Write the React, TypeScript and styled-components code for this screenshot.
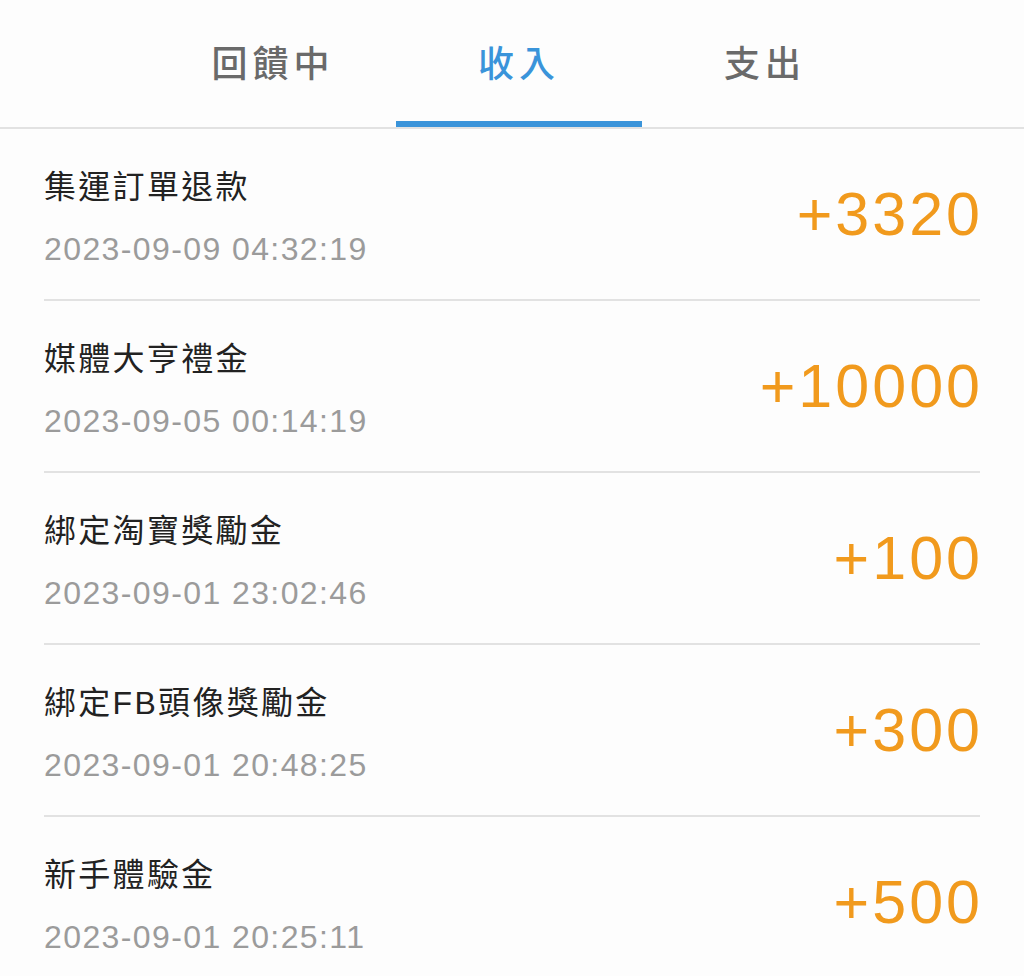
import React, { useState } from 'react'
import styled, { createGlobalStyle } from 'styled-components'

const GlobalStyle = createGlobalStyle`
  body {
    margin: 0;
    background: #fdfdfd;
    font-family: "Liberation Sans", "Noto Sans CJK TC", sans-serif;
  }
`

const Page = styled.div`
  width: 1024px;
  height: 976px;
  overflow: hidden;
  background: #fdfdfd;
`

const TabBar = styled.div`
  display: flex;
  justify-content: center;
  height: 127px;
  padding-left: 14px;
  border-bottom: 2px solid #e2e2e2;
`

const Tab = styled.div<{ $active?: boolean }>`
  position: relative;
  width: 246px;
  display: flex;
  align-items: center;
  justify-content: center;
  padding-bottom: 6px;
  font-size: 36px;
  font-weight: 500;
  letter-spacing: 5px;
  color: ${(p) => (p.$active ? '#3a94da' : '#6a6a6a')};
  cursor: pointer;

  &::after {
    content: '';
    display: ${(p) => (p.$active ? 'block' : 'none')};
    position: absolute;
    left: 0;
    right: 0;
    bottom: 0;
    height: 6px;
    background: #3a94da;
  }
`

const List = styled.div`
  padding: 0 44px;
`

const Row = styled.div`
  display: flex;
  align-items: center;
  justify-content: space-between;
  height: 170px;
  border-bottom: 2px solid #e2e2e2;
`

const Info = styled.div`
  display: flex;
  flex-direction: column;
  gap: 22px;
  margin-top: 8px;
`

const Title = styled.div`
  font-size: 32px;
  line-height: 40px;
  letter-spacing: 2.3px;
  color: #222;
`

const Time = styled.div`
  font-size: 32px;
  line-height: 40px;
  letter-spacing: 1.4px;
  color: #9b9b9b;
`

const Amount = styled.div`
  font-size: 61px;
  line-height: 1;
  letter-spacing: 3px;
  color: #f19a1d;
  margin-right: -3px;
`

const tabs = ['回饋中', '收入', '支出']

const records = [
  { title: '集運訂單退款', time: '2023-09-09 04:32:19', amount: 3320 },
  { title: '媒體大亨禮金', time: '2023-09-05 00:14:19', amount: 10000 },
  { title: '綁定淘寶獎勵金', time: '2023-09-01 23:02:46', amount: 100 },
  { title: '綁定FB頭像獎勵金', time: '2023-09-01 20:48:25', amount: 300 },
  { title: '新手體驗金', time: '2023-09-01 20:25:11', amount: 500 },
]

const App = () => {
  const [active, setActive] = useState(1)
  return (
    <>
      <GlobalStyle />
      <Page>
        <TabBar>
          {tabs.map((t, i) => (
            <Tab key={t} $active={i === active} onClick={() => setActive(i)}>
              {t}
            </Tab>
          ))}
        </TabBar>
        <List>
          {records.map((r) => (
            <Row key={r.time}>
              <Info>
                <Title>{r.title}</Title>
                <Time>{r.time}</Time>
              </Info>
              <Amount>+{r.amount}</Amount>
            </Row>
          ))}
        </List>
      </Page>
    </>
  )
}

export default App
